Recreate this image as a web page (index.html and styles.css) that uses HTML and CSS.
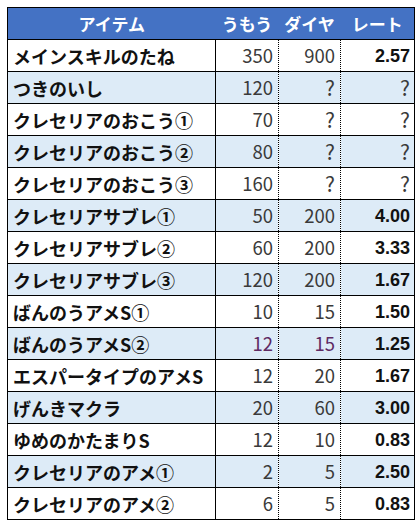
FILE: index.html
```html
<!DOCTYPE html>
<html lang="ja">
<head>
<meta charset="utf-8">
<link rel="stylesheet" href="styles.css">
</head>
<body>
<table class="sheet">
  <colgroup>
    <col class="c-name"><col class="c-num"><col class="c-num2"><col class="c-rate">
  </colgroup>
  <thead>
    <tr><th class="h-name">アイテム</th><th>うもう</th><th>ダイヤ</th><th>レート</th></tr>
  </thead>
  <tbody>
    <tr><td class="name">メインスキルのたね</td><td class="num">350</td><td class="num">900</td><td class="rate">2.57</td></tr>
    <tr class="alt"><td class="name">つきのいし</td><td class="num">120</td><td class="num q">?</td><td class="rate q">?</td></tr>
    <tr><td class="name">クレセリアのおこう①</td><td class="num">70</td><td class="num q">?</td><td class="rate q">?</td></tr>
    <tr class="alt"><td class="name">クレセリアのおこう②</td><td class="num">80</td><td class="num q">?</td><td class="rate q">?</td></tr>
    <tr><td class="name">クレセリアのおこう③</td><td class="num">160</td><td class="num q">?</td><td class="rate q">?</td></tr>
    <tr class="alt"><td class="name">クレセリアサブレ①</td><td class="num">50</td><td class="num">200</td><td class="rate">4.00</td></tr>
    <tr><td class="name">クレセリアサブレ②</td><td class="num">60</td><td class="num">200</td><td class="rate">3.33</td></tr>
    <tr class="alt"><td class="name">クレセリアサブレ③</td><td class="num">120</td><td class="num">200</td><td class="rate">1.67</td></tr>
    <tr><td class="name">ばんのうアメS①</td><td class="num">10</td><td class="num">15</td><td class="rate">1.50</td></tr>
    <tr class="alt"><td class="name">ばんのうアメS②</td><td class="num purple">12</td><td class="num purple">15</td><td class="rate">1.25</td></tr>
    <tr><td class="name">エスパータイプのアメS</td><td class="num">12</td><td class="num">20</td><td class="rate">1.67</td></tr>
    <tr class="alt"><td class="name">げんきマクラ</td><td class="num">20</td><td class="num">60</td><td class="rate">3.00</td></tr>
    <tr><td class="name">ゆめのかたまりS</td><td class="num">12</td><td class="num">10</td><td class="rate">0.83</td></tr>
    <tr class="alt"><td class="name">クレセリアのアメ①</td><td class="num">2</td><td class="num">5</td><td class="rate">2.50</td></tr>
    <tr><td class="name">クレセリアのアメ②</td><td class="num">6</td><td class="num">5</td><td class="rate">0.83</td></tr>
  </tbody>
</table>
</body>
</html>
```
FILE: styles.css
```css
html, body {
  margin: 0;
  padding: 0;
  background: #ffffff;
}
.sheet {
  margin: 7px 0 0 7px;
  border-collapse: collapse;
  table-layout: fixed;
  width: 408px;
  border: 1px solid #000;
  font-family: "Noto Sans CJK JP", "Noto Sans", sans-serif;
}
.c-name { width: 208px; }
.c-num { width: 63px; }
.c-num2 { width: 62px; }
.c-rate { width: 74px; }

.sheet th {
  background: #4472c4;
  color: #ffffff;
  font-weight: 700;
  font-size: 17px;
  height: 31px;
  padding: 0;
  text-align: center;
  border-bottom: 1px solid #000;
  line-height: 1;
}
.sheet td {
  height: 31px;
  padding: 0;
  border-bottom: 1px solid #000;
  line-height: 1;
  white-space: nowrap;
  overflow: hidden;
}
.sheet tr.alt td {
  background: #ddebf7;
}
.name {
  padding-left: 5px !important;
  font-size: 18px;
  font-weight: 700;
  color: #111;
  border-right: 1px solid #000;
}
.num {
  text-align: right;
  padding-right: 5px !important;
  font-size: 18.5px;
  font-weight: 400;
  color: #3a3a3a;
  border-right: 1px dotted #000;
}
.rate {
  text-align: right;
  padding-right: 4px !important;
  font-family: "Liberation Sans", Arial, sans-serif;
  font-size: 18px;
  font-weight: 700;
  color: #111;
}
.q {
  font-family: "Noto Sans CJK JP", sans-serif;
  font-size: 21px;
  font-weight: 400;
  color: #3a3a3a;
}
.purple {
  color: #5e2a63;
}
```
